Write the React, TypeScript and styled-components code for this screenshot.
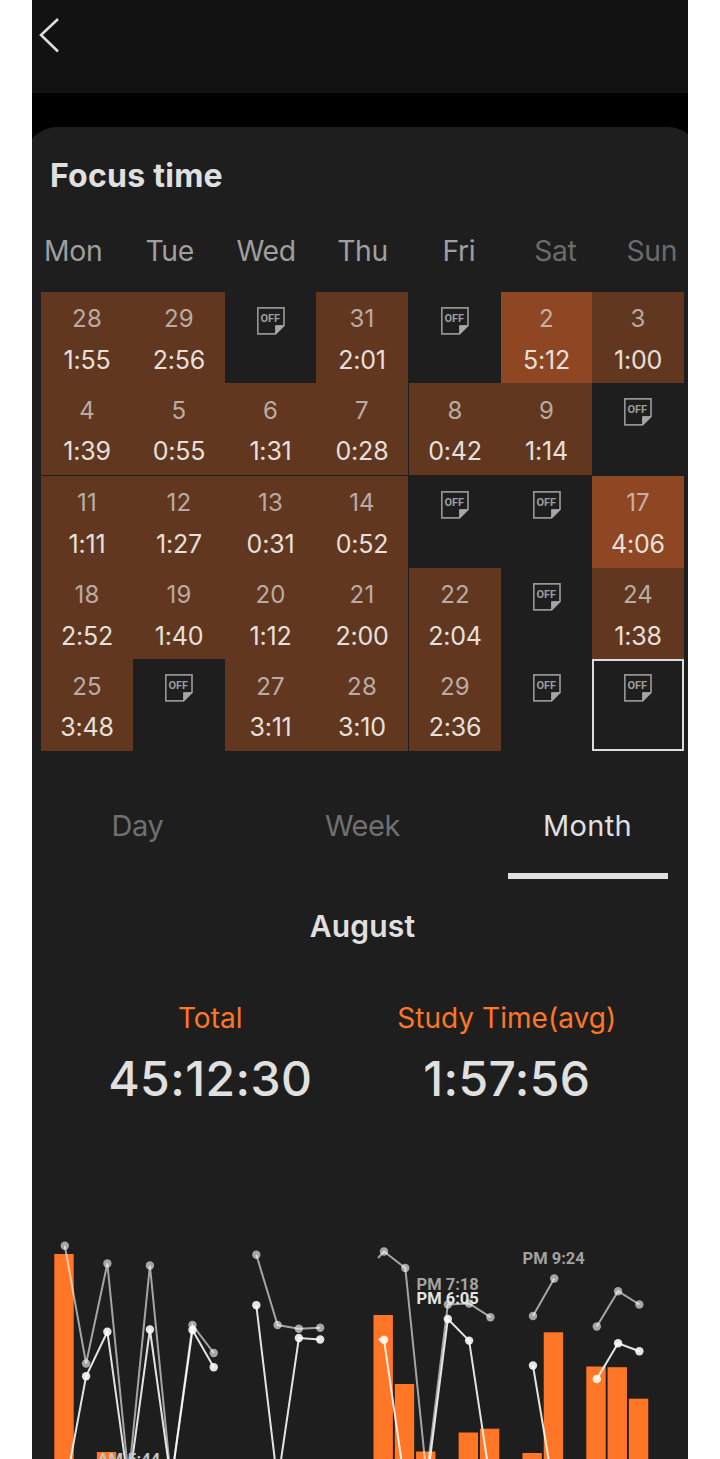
import React from "react";
import styled, { createGlobalStyle } from "styled-components";

const GlobalStyle = createGlobalStyle`
  * { box-sizing: border-box; }
  body { margin: 0; background: #fff; font-family: Inter, "Liberation Sans", sans-serif; }
`;

const Screen = styled.div`
  width: 656px;
  height: 1459px;
  margin: 0 auto;
  background: #000;
  overflow: hidden;
  display: flex;
  flex-direction: column;
`;

const TopBar = styled.header`
  flex: none;
  height: 93px;
  padding: 17px 6px;
  background: #121212;
`;

const BackButton = styled.button`
  display: block;
  width: 22px;
  height: 36px;
  padding: 0;
  border: 0;
  background: none;
`;

const Card = styled.main`
  flex: none;
  width: 675px;
  height: 1400px;
  margin: 34px 0 0 -7px;
  border-radius: 32px 32px 0 0;
  background: #1e1e1e;
  display: flex;
  flex-direction: column;
`;

const Title = styled.h1`
  margin: 29px 0 0 25px;
  font-size: 32px;
  line-height: 40px;
  font-weight: 700;
  letter-spacing: 0.25px;
  color: #e0e0e0;
`;

const Weekdays = styled.div`
  display: grid;
  grid-template-columns: repeat(7, 1fr);
  margin-top: 35px;
  height: 40px;
  text-align: center;
`;

const Weekday = styled.span<{ $weekend?: boolean }>`
  font-size: 28.3px;
  line-height: 41px;
  letter-spacing: -0.35px;
  color: ${(p) => (p.$weekend ? "#6b6b6b" : "#9f9f9f")};
`;

const Calendar = styled.div`
  margin: 21px 0 0 16px;
  display: grid;
  width: 643px;
  grid-template-columns: 92px 92px 91px 92px 93px 91px 92px;
  grid-template-rows: 91px 92px 93px 91px 92px;
`;

type Level = "off" | "low" | "high";

const Cell = styled.div<{ $level: Level; $today?: boolean; $gapLeft?: boolean; $gapTop?: boolean }>`
  display: flex;
  flex-direction: column;
  align-items: center;
  padding-top: 6px;
  background: ${(p) => ({ off: "transparent", low: "#613720", high: "#8e4722" })[p.$level]};
  border-left: ${(p) => (p.$gapLeft ? "1px solid #1e1e1e" : "0")};
  border-top: ${(p) => (p.$gapTop ? "1px solid #1e1e1e" : "0")};
  ${(p) => p.$today && "box-shadow: inset 0 0 0 2px #dcdce0;"}
`;

const DayNumber = styled.span<{ $low: boolean }>`
  margin-top: ${(p) => (p.$low ? 1 : 0)}px;
  margin-bottom: ${(p) => (p.$low ? 0 : 1)}px;
  font-size: 24px;
  line-height: 41px;
  letter-spacing: 0.2px;
  color: rgba(224, 224, 224, 0.7);
`;

const DayTime = styled.span`
  font-size: 25px;
  line-height: 41px;
  letter-spacing: -0.2px;
  color: #e6e0dd;
`;

const OffMark = styled.svg`
  display: block;
  margin-top: 9px;
`;

const Tabs = styled.nav`
  display: grid;
  grid-template-columns: repeat(3, 1fr);
  height: 128px;
  padding-top: 55px;
`;

const Tab = styled.button<{ $active?: boolean }>`
  display: flex;
  flex-direction: column;
  align-items: center;
  padding: 0;
  border: 0;
  background: none;
  font-family: inherit;
  font-size: 29px;
  line-height: 40px;
  letter-spacing: ${(p) => (p.$active ? 0.3 : -0.4)}px;
  color: ${(p) => (p.$active ? "#e0e0e0" : "#707070")};
`;

const TabLine = styled.span`
  width: 160px;
  height: 6px;
  margin-top: 27px;
  background: #e0e0e0;
`;

const MonthName = styled.h2`
  margin: 27px 0 0;
  text-align: center;
  font-size: 30px;
  line-height: 40px;
  font-weight: 600;
  letter-spacing: 0.15px;
  color: #e0e0e0;
`;

const Stats = styled.section`
  display: grid;
  grid-template-columns: 1fr 1fr;
  margin: 52px 45px 0 37px;
  height: 105px;
  text-align: center;
`;

const Stat = styled.div`
  display: flex;
  flex-direction: column;
`;

const StatLabel = styled.span`
  font-size: 28px;
  line-height: 40px;
  letter-spacing: 0.05px;
  color: #ff7626;
`;

const StatValue = styled.span`
  margin-top: 11px;
  font-size: 48px;
  line-height: 60px;
  font-weight: 500;
  letter-spacing: 0.4px;
  color: #e0e0e0;
`;

const Chart = styled.svg`
  display: block;
  margin: 97px 0 0 7px;
  font-family: Roboto, sans-serif;
  font-weight: 700;
  font-size: 16.5px;
`;

type Day = [string, string?, Level?];

const days: Day[] = [
  ["28", "1:55"], ["29", "2:56"], ["30"], ["31", "2:01"], ["1"], ["2", "5:12", "high"], ["3", "1:00"],
  ["4", "1:39"], ["5", "0:55"], ["6", "1:31"], ["7", "0:28"], ["8", "0:42"], ["9", "1:14"], ["10"],
  ["11", "1:11"], ["12", "1:27"], ["13", "0:31"], ["14", "0:52"], ["15"], ["16"], ["17", "4:06", "high"],
  ["18", "2:52"], ["19", "1:40"], ["20", "1:12"], ["21", "2:00"], ["22", "2:04"], ["23"], ["24", "1:38"],
  ["25", "3:48"], ["26"], ["27", "3:11"], ["28", "3:10"], ["29", "2:36"], ["30"], ["31"],
];

const STEP = 21.28;
const TOP = 1200;

const bars: [number, number][] = [
  [0, 1254], [2, 1452], [15, 1315], [16, 1384], [17, 1451.5], [19, 1432.5], [20, 1428.7],
  [22, 1453], [23, 1332.3], [25, 1366.5], [26, 1367.2], [27, 1398.7],
];

const HIDDEN = 1470;
type Point = [number, number];

const endTimes: Point[][] = [
  [[0, 1245.7], [1, 1363.5], [2, 1263.5], [3, 1478], [4, 1265.5], [5, 1482], [6, 1325], [7, 1353]],
  [[9, 1254.7], [10, 1325], [11, 1328.7], [12, 1327.7]],
  [[14.72, 1258], [15, 1251.5], [16, 1268], [17, 1476], [18, 1304.5], [19, 1303.5], [20, 1317.2]],
  [[22, 1316], [23, 1278.5]],
  [[25, 1326.5], [26, 1291.2], [27, 1304.5]],
];

const startTimes: Point[][] = [
  [[0, 1490], [1, 1376.3], [2, 1331.7], [3, 1486], [4, 1329.5], [5, 1482], [6, 1330], [7, 1367.3]],
  [[9, 1305.3], [10, 1483], [11, 1338], [12, 1339.5]],
  [[14.74, 1339.5], [15, 1339.7], [16, 1487], [17, 1486], [18, 1319], [19, 1340.6], [20, 1482]],
  [[22, 1365.5], [23, 1493]],
  [[25, 1379], [26, 1343.2], [27, 1351.3]],
];

const px = (i: number) => 32.8 + i * STEP;

function Series({ groups, color }: { groups: Point[][]; color: string }) {
  return (
    <g>
      {groups.map((g, k) => (
        <g key={k}>
          <polyline
            points={g.map(([i, y]) => `${px(i)},${y - TOP}`).join(" ")}
            fill="none"
            stroke={color}
            strokeWidth={2}
          />
          {g
            .filter(([i, y]) => Number.isInteger(i) && y < HIDDEN)
            .map(([i, y]) => (
              <circle key={i} cx={px(i)} cy={y - TOP} r={4.2} fill={color} />
            ))}
        </g>
      ))}
    </g>
  );
}

function OffIcon() {
  return (
    <OffMark width="28" height="28" viewBox="0 0 28 28">
      <path d="M0.8 0.8H27V18.5L18.5 26.8H0.8Z" fill="none" stroke="#949494" strokeWidth="1.7" />
      <path d="M18.5 27V18.5H27Z" fill="#a6a6a6" stroke="#a6a6a6" strokeWidth="0.8" />
      <text x="13.3" y="15.2" textAnchor="middle" fontFamily="Roboto, sans-serif" fontSize="11" fontWeight="700" fill="#9c9c9c">
        OFF
      </text>
    </OffMark>
  );
}

export default function App() {
  return (
    <>
      <GlobalStyle />
      <Screen>
        <TopBar>
          <BackButton aria-label="Back">
            <svg width="22" height="36" viewBox="0 0 22 36" fill="none" stroke="#dcdcdc" strokeWidth="2.6">
              <path d="M20 2L3 18L20 34.5" />
            </svg>
          </BackButton>
        </TopBar>
        <Card>
          <Title>Focus time</Title>
          <Weekdays>
            {["Mon", "Tue", "Wed", "Thu", "Fri", "Sat", "Sun"].map((d, i) => (
              <Weekday key={d} $weekend={i > 4}>{d}</Weekday>
            ))}
          </Weekdays>
          <Calendar>
            {days.map(([n, time, level], i) => (
              <Cell
                key={i}
                $level={time ? level ?? "low" : "off"}
                $today={i === days.length - 1}
                $gapLeft={i % 7 === 4}
                $gapTop={Math.floor(i / 7) === 2}
              >
                {time ? (
                  <>
                    <DayNumber $low={[1, 4].includes(Math.floor(i / 7))}>{n}</DayNumber>
                    <DayTime>{time}</DayTime>
                  </>
                ) : (
                  <OffIcon />
                )}
              </Cell>
            ))}
          </Calendar>
          <Tabs>
            <Tab>Day</Tab>
            <Tab>Week</Tab>
            <Tab $active>
              Month
              <TabLine />
            </Tab>
          </Tabs>
          <MonthName>August</MonthName>
          <Stats>
            <Stat>
              <StatLabel>Total</StatLabel>
              <StatValue>45:12:30</StatValue>
            </Stat>
            <Stat>
              <StatLabel>Study Time(avg)</StatLabel>
              <StatValue>1:57:56</StatValue>
            </Stat>
          </Stats>
          <Chart width="656" height="260" viewBox="0 0 656 260">
            {bars.map(([i, y]) => (
              <rect key={i} x={22.3 + i * STEP} y={y - TOP} width={19.4} height={1460 - y} fill="#ff7626" />
            ))}
            <Series groups={endTimes} color="rgba(255,255,255,0.6)" />
            <Series groups={startTimes} color="rgba(255,255,255,0.88)" />
            <text x="490.5" y="64" fill="#a2a2a2">PM 9:24</text>
            <text x="384.5" y="90" fill="#a2a2a2">PM 7:18</text>
            <text x="384.5" y="104" fill="#e4e4e4">PM 6:05</text>
            <text x="65.5" y="265" fill="#c4c4c4">AM 5:44</text>
          </Chart>
        </Card>
      </Screen>
    </>
  );
}
